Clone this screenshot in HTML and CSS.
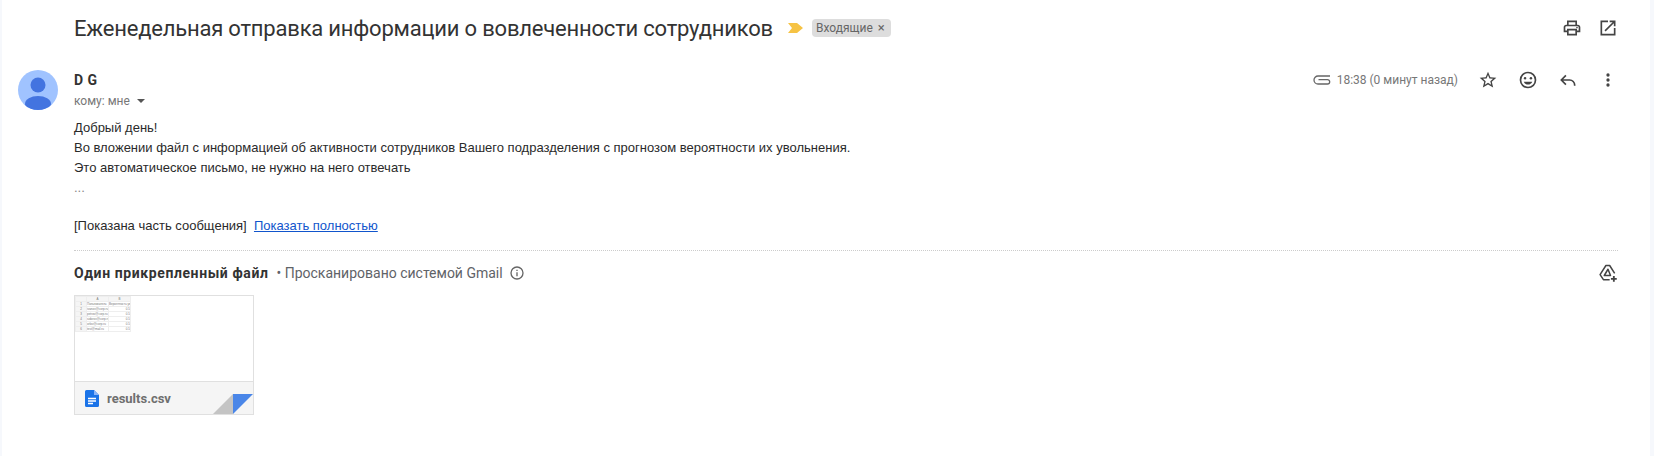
FILE: index.html
```html
<!DOCTYPE html>
<html lang="en">
<head>
    <meta charset="UTF-8">
    <title>Еженедельная отправка информации</title>
    <link rel="stylesheet" href="styles.css">
</head>
<body>
    <div class="mail">
        <div class="subject-row">
            <h1 class="subject">Еженедельная отправка информации о вовлеченности сотрудников</h1>
            <svg class="marker" width="15" height="10" viewBox="0 0 15 10"><path d="M0 0h9l6 5-6 5H0l4-5z" fill="#f6c344"/></svg>
            <span class="label">Входящие <span class="label-x">×</span></span>
            <div class="subject-icons">
                <svg width="20" height="20" viewBox="0 0 24 24" fill="#444"><path d="M19 8h-1V3H6v5H5c-1.66 0-3 1.34-3 3v6h4v4h12v-4h4v-6c0-1.66-1.34-3-3-3zM8 5h8v3H8V5zm8 14H8v-4h8v4zm4-4h-2v-2H6v2H4v-4c0-.55.45-1 1-1h14c.55 0 1 .45 1 1v4z"/><circle cx="18" cy="11.5" r="1"/></svg>
                <svg width="20" height="20" viewBox="0 0 24 24" fill="#444"><path d="M19 19H5V5h7V3H3v18h18v-9h-2v7zM14 3v2h3.59l-9.83 9.83 1.41 1.41L19 6.41V10h2V3h-7z"/></svg>
            </div>
        </div>

        <div class="message">
            <svg class="avatar" width="40" height="40" viewBox="0 0 40 40">
                <circle cx="20" cy="20" r="20" fill="#a0c3ff"/>
                <clipPath id="avatarClip"><circle cx="20" cy="20" r="20"/></clipPath>
                <g clip-path="url(#avatarClip)" fill="#4374e0">
                    <circle cx="20" cy="15" r="7.5"/>
                    <ellipse cx="20" cy="34" rx="13" ry="8"/>
                </g>
            </svg>
            <div class="message-main">
                <div class="message-head">
                    <div>
                        <div class="sender">D G</div>
                        <div class="to">кому: мне <span class="to-arrow"></span></div>
                    </div>
                    <div class="message-tools">
                        <svg class="clip" width="18" height="10" viewBox="0 0 18 10" fill="none" stroke="#666" stroke-width="1.3"><path d="M17 1H5a4 4 0 0 0 0 8h9.500a2.200 2.200 0 0 0 0-4.400H5.500"/></svg>
                        <span class="time">18:38 (0 минут назад)</span>
                        <svg class="tool" width="20" height="20" viewBox="0 0 24 24" fill="#444"><path d="M22 9.24l-7.19-.62L12 2 9.19 8.63 2 9.24l5.46 4.73L5.82 21 12 17.27 18.18 21l-1.63-7.03L22 9.24zM12 15.4l-3.76 2.27 1-4.28-3.32-2.88 4.38-.38L12 6.1l1.71 4.04 4.38.38-3.32 2.88 1 4.28L12 15.4z"/></svg>
                        <svg class="tool" width="20" height="20" viewBox="0 0 24 24" fill="#444"><path d="M12 2a10 10 0 1 0 0 20 10 10 0 0 0 0-20zm0 18a8 8 0 1 1 0-16 8 8 0 0 1 0 16z"/><circle cx="8.5" cy="10" r="1.5"/><circle cx="15.5" cy="10" r="1.5"/><path d="M12 17.5c2.3 0 4.3-1.4 5.1-3.5H6.9c.8 2.1 2.8 3.500 5.100 3.500z"/></svg>
                        <svg class="tool" width="20" height="20" viewBox="0 0 24 24" fill="none" stroke="#444" stroke-width="2"><path d="M9.500 6.500L4 12l5.500 5.500M4 12h10a6 6 0 0 1 6 6v1"/></svg>
                        <svg class="tool" width="20" height="20" viewBox="0 0 24 24" fill="#444"><circle cx="12" cy="6" r="2"/><circle cx="12" cy="12" r="2"/><circle cx="12" cy="18" r="2"/></svg>
                    </div>
                </div>
                <div class="body-text">
                    <div>Добрый день!</div>
                    <div>Во вложении файл с информацией об активности сотрудников Вашего подразделения с прогнозом вероятности их увольнения.</div>
                    <div>Это автоматическое письмо, не нужно на него отвечать</div>
                    <div class="dots">...</div>
                    <div class="clipped">[Показана часть сообщения]&nbsp; <a href="#">Показать полностью</a></div>
                </div>
            </div>
        </div>

        <div class="attachments">
            <div class="attach-head">
                <strong>Один прикрепленный файл</strong>
                <span class="scan">• Просканировано системой Gmail</span>
                <svg width="16" height="16" viewBox="0 0 24 24" fill="#666"><path d="M11 7h2v2h-2zm0 4h2v6h-2zm1-9a10 10 0 1 0 0 20 10 10 0 0 0 0-20zm0 18a8 8 0 1 1 0-16 8 8 0 0 1 0 16z"/></svg>
                <svg class="drive-add" width="20" height="20" viewBox="0 0 24 24" fill="none" stroke="#444" stroke-width="1.800" stroke-linejoin="round"><path d="M14 20H6.500L2.500 14 9.500 3h4.500l6 9.500"/><path d="M12 7.500L7.500 15h7.500z"/><path d="M19 15.500v7M15.500 19h7" stroke-width="2.200"/></svg>
            </div>
            <div class="card">
                <table class="sheet">
                    <tr class="sheet-top"><td></td><td>A</td><td>B</td></tr>
                    <tr><td>1</td><td>Пользователь</td><td>Вероятность ув</td></tr>
                    <tr><td>2</td><td>ivanov@corp.ru</td><td class="num">0.5</td></tr>
                    <tr><td>3</td><td>petrov@corp.ru</td><td class="num">0.5</td></tr>
                    <tr><td>4</td><td>sidorov@corp.ru</td><td class="num">0.5</td></tr>
                    <tr><td>5</td><td>orlov@corp.ru</td><td class="num">0.5</td></tr>
                    <tr><td>6</td><td>test@mail.ru</td><td class="num">0.5</td></tr>
                </table>
                <div class="card-foot">
                    <svg width="14" height="17" viewBox="0 0 14 17"><path d="M1.500 0H9l5 5v10.500a1.500 1.500 0 0 1-1.500 1.500h-11A1.500 1.500 0 0 1 0 15.500v-14A1.500 1.500 0 0 1 1.500 0z" fill="#1a73e8"/><path d="M3 8.500h8M3 11h8M3 13.500h5" stroke="#fff" stroke-width="1.300"/><path d="M9 0v5h5z" fill="#8ab4f8"/></svg>
                    <span class="file-name">results.csv</span>
                </div>
                <svg class="fold" width="40" height="20" viewBox="0 0 40 20"><path d="M20 0v20H0z" fill="#c4c4c4"/><path d="M20 0h20L20 20z" fill="#4a86e8"/></svg>
            </div>
        </div>
    </div>
</body>
</html>
```
FILE: styles.css
```css
html, body {
    margin: 0;
    padding: 0;
}
body {
    background-color: #f6f8fc;
    height: 456px;
    overflow: hidden;
    padding: 0 4px 0 2px;
    font-family: "Liberation Sans", Arial, sans-serif;
    color: #222;
}
.mail {
    background-color: #fff;
    height: 456px;
    box-sizing: border-box;
    padding: 0 0 0 16px;
}
.subject-row {
    display: flex;
    align-items: center;
    height: 56px;
    padding-left: 56px;
    padding-right: 32px;
}
.subject {
    margin: 0;
    font-family: Roboto, sans-serif;
    font-size: 22px;
    font-weight: 400;
    letter-spacing: -0.2px;
    color: #333;
}
.marker {
    margin-left: 15px;
}
.label {
    margin-left: 9px;
    padding: 0 6px 0 4px;
    height: 18px;
    line-height: 18px;
    font-family: Roboto, sans-serif;
    font-size: 12px;
    color: #666;
    background-color: #ddd;
    border-radius: 4px;
}
.label-x {
    margin-left: 2px;
    font-size: 13px;
}
.subject-icons {
    margin-left: auto;
    display: flex;
    gap: 16px;
}
.message {
    display: flex;
    gap: 16px;
    padding-top: 14px;
    padding-right: 32px;
}
.avatar {
    flex: none;
}
.message-main {
    flex: 1;
}
.message-head {
    display: flex;
    justify-content: space-between;
    align-items: flex-start;
}
.sender {
    font-family: Roboto, sans-serif;
    font-size: 14px;
    font-weight: 700;
    color: #333;
    letter-spacing: 0.5px;
    height: 20px;
    line-height: 20px;
}
.to {
    font-family: Roboto, sans-serif;
    font-size: 12px;
    color: #777;
    margin-top: 4px;
}
.to-arrow {
    display: inline-block;
    margin-left: 4px;
    vertical-align: 2px;
    border-left: 4.5px solid transparent;
    border-right: 4.5px solid transparent;
    border-top: 4.5px solid #555;
}
.message-tools {
    display: flex;
    align-items: center;
    height: 20px;
}
.clip {
    margin-right: 6px;
}
.time {
    font-family: Roboto, sans-serif;
    font-size: 12px;
    color: #777;
}
.tool {
    margin-left: 20px;
}
.body-text {
    margin-top: 10px;
    font-size: 13px;
    line-height: 20px;
    color: #2a2a2a;
}
.dots {
    color: #888;
}
.clipped {
    margin-top: 18px;
}
.clipped a {
    color: #15c;
}
.attachments {
    margin: 14px 32px 0 56px;
    border-top: 1px dotted #ccc;
}
.attach-head {
    display: flex;
    align-items: center;
    height: 44px;
    font-family: Roboto, sans-serif;
    font-size: 14px;
    color: #5f6368;
}
.attach-head strong {
    color: #333;
    font-weight: 700;
    letter-spacing: 0.6px;
    margin-right: 8px;
}
.scan {
    margin-right: 6px;
}
.drive-add {
    margin-left: auto;
}
.card {
    position: relative;
    width: 178px;
    height: 118px;
    border: 1px solid #e0e0e0;
    overflow: hidden;
    background-color: #fff;
}
.sheet {
    border-collapse: collapse;
    font-size: 3px;
    line-height: 4px;
    color: #777;
    table-layout: fixed;
    width: 56px;
}
.sheet td {
    border: 1px solid #eee;
    padding: 0;
    height: 4px;
    white-space: nowrap;
    overflow: hidden;
}
.sheet td:first-child {
    width: 10px;
    text-align: center;
    background-color: #f5f5f5;
}
.sheet-top td {
    background-color: #f5f5f5;
    text-align: center;
}
.sheet .num {
    text-align: right;
}
.card-foot {
    position: absolute;
    left: 0;
    right: 0;
    bottom: 0;
    height: 32px;
    display: flex;
    align-items: center;
    gap: 8px;
    padding-left: 10px;
    background-color: #f5f5f5;
    border-top: 1px solid #e0e0e0;
}
.file-name {
    font-family: Roboto, sans-serif;
    font-size: 13px;
    font-weight: 700;
    color: #6f6f6f;
}
.fold {
    position: absolute;
    right: 0;
    bottom: 0;
}
```
